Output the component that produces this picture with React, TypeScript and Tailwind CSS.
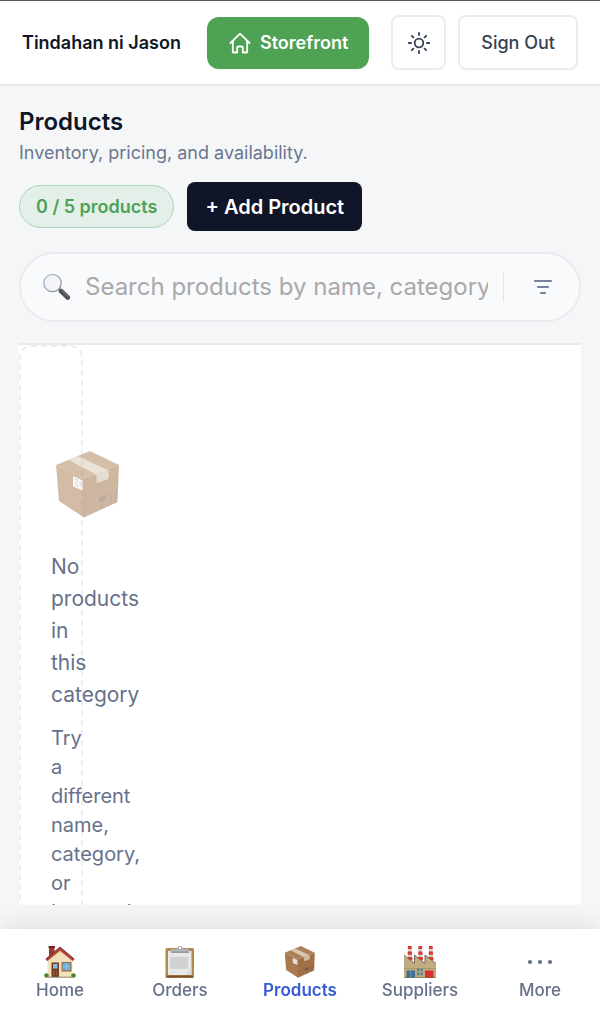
import type { ReactNode } from "react";
import clsx from "clsx";

function HomeIcon() {
  return (
    <svg className="size-6" viewBox="0 0 24 24" fill="none" stroke="currentColor" strokeWidth="1.8" strokeLinecap="round" strokeLinejoin="round" aria-hidden="true">
      <path d="M2.500 12 12 2.700l9.500 9.300" />
      <path d="M4.800 10.200v10.300a1 1 0 0 0 1 1h3.400v-5a1 1 0 0 1 1-1h3.600a1 1 0 0 1 1 1v5h3.400a1 1 0 0 0 1-1V10.200" />
    </svg>
  );
}

function SunIcon() {
  return (
    <svg className="size-6" viewBox="0 0 24 24" fill="none" stroke="currentColor" strokeWidth="1.800" strokeLinecap="round" aria-hidden="true">
      <circle cx="12" cy="12" r="4.300" />
      <path d="M12 1.800v2.200M12 20v2.200M1.800 12H4M20 12h2.200M4.800 4.800l1.600 1.600M17.600 17.600l1.600 1.600M4.800 19.200l1.600-1.600M17.600 6.400l1.600-1.600" />
    </svg>
  );
}

function SearchIcon() {
  return (
    <svg className="size-7 shrink-0" viewBox="0 0 28 28" aria-hidden="true">
      <defs>
        <linearGradient id="lens" x1="0" y1="0" x2="1" y2="1">
          <stop offset="0" stopColor="#eef0f6" />
          <stop offset="1" stopColor="#f8f8f8" />
        </linearGradient>
        <linearGradient id="rim" x1="0" y1="0" x2="1" y2="1">
          <stop offset="0" stopColor="#b4bedb" />
          <stop offset="1" stopColor="#8b8b8b" />
        </linearGradient>
      </defs>
      <path d="m16 16 3 3" stroke="#8d8f92" strokeWidth="2" />
      <path d="m18 18 6.800 6.500" stroke="#4b4f55" strokeWidth="4.600" strokeLinecap="round" />
      <path d="m19 17.500 6 5.900" stroke="#8a8e93" strokeWidth="1" strokeLinecap="round" />
      <circle cx="9.500" cy="10" r="8.700" fill="url(#lens)" stroke="url(#rim)" strokeWidth="1.300" />
    </svg>
  );
}

function FilterIcon() {
  return (
    <svg className="size-5" viewBox="0 0 20 20" stroke="currentColor" strokeWidth="2.200" strokeLinecap="round" aria-hidden="true">
      <path d="M2 4h16M5 10h10M8 16h4" />
    </svg>
  );
}

function BoxArt({ className }: { className: string }) {
  return (
    <svg className={className} viewBox="0 0 64 67" aria-hidden="true">
      <path d="M0 14 34 0l29 14-35 13.500z" fill="#ae8056" />
      <path d="m0 14 28 13.500v39L3 50z" fill="#a97a50" />
      <path d="m28 27.500 35-13.500-1.500 37L28 66.500z" fill="#a17045" />
      <path d="M28 27.500v39" stroke="#8f6038" strokeWidth=".7" />
      <path d="m12.500 9 9-4 31 14.500-12 4.200z" fill="#d8c8b2" />
      <path d="m40.500 23.700 12-4.200V28l-12 4z" fill="#cdbda6" />
      <path d="m17 25 9.500 4.500v10L17 35.500z" fill="#f0f1f2" />
      <path d="m19 28 3 1.400M19 31l3 1.400M19 34l3 1.400m1.500-4 2 1M23.500 34l2 1" stroke="#9b9fa5" strokeWidth="1" />
      <path d="m42 47 8.500-3c0 4-1.500 6-3.500 7-2.500.8-4.800-.4-5-4z" fill="#7b5a3e" />
      <path d="M46.500 51v6m-2.200.700 4.400-1.700" stroke="#7b5a3e" strokeWidth=".8" fill="none" />
      <path d="M54.500 42.500v9M59.500 40.500v9M53.500 53.500l7-2.500M53.500 44l1-2 1 1.500m3-1.500 1-2 1 1.500" fill="none" stroke="#7b5a3e" strokeWidth=".9" />
    </svg>
  );
}

function HouseArt() {
  return (
    <svg className="size-8" viewBox="0 0 32 32" aria-hidden="true">
      <path d="M5 1h5.500v9H5z" fill="#9d382d" />
      <path d="M4.500 0h6.500v2H4.500z" fill="#72251f" />
      <path d="M3.500 14 16 4l12.500 10v17.500h-25z" fill="#f1e0bc" />
      <path d="M3.500 14 16 4l12.500 10v1.500L16 6 3.500 15.500z" fill="#d8c49b" />
      <path d="M1.500 13.300 16 1l14.500 12.300-1.600 1.700L16 4.500 3.100 15z" fill="#b03a32" />
      <path d="M2 12.800 16 1l14 11.800" fill="none" stroke="#5e3330" strokeWidth=".8" />
      <path d="M7.500 16.500h7.500v15H7.500z" fill="#713b24" />
      <path d="M9 18h4.500v4.500H9z" fill="#83bde0" />
      <path d="M9 24.500h1.700v5H9zm2.800 0h1.700v5h-1.700z" fill="#8d5336" />
      <path d="M17.500 16h10v9.500h-10z" fill="#94704f" />
      <path d="M18.700 17.200h7.600v6.800h-7.600z" fill="#6cb0df" />
      <path d="M22.500 17v7m-3.800-3.500h7.600" stroke="#a8d5ef" strokeWidth=".5" />
      <path d="M4 31.200h24.500" stroke="#9d8668" />
      <path d="M6 31.500h10" stroke="#aaa" />
      <circle cx="2.500" cy="29.500" r="2.300" fill="#4f832a" />
      <circle cx="29.500" cy="29.500" r="2.300" fill="#4f832a" />
    </svg>
  );
}

function ClipboardArt() {
  return (
    <svg className="size-8" viewBox="0 0 32 32" aria-hidden="true">
      <rect x="1.500" y="2" width="28.500" height="30" rx="1.500" fill="#b3884f" />
      <path d="M2.500 29.500H29v2H2.500z" fill="#7b4e27" />
      <path d="M4 5h23.500v24H4z" fill="#e9e9e9" />
      <path d="M6 11h18v12H6z" fill="#d2d3d4" />
      <path d="M6 11.500h17M6 14h19M6 16.500h18M6 19h19M6 21.500h16M6 26h6M6 9h4" stroke="#cbcdce" strokeWidth=".6" />
      <path d="m27.500 22-7 7h7z" fill="#dadada" />
      <path d="M7 3h5.500l1-1.500h5L19.500 3H25v3.500H7z" fill="#b0b4b6" />
      <path d="M7 5.700h18v1H7z" fill="#84888a" />
      <circle cx="16" cy="1.900" r="1.800" fill="#fff" stroke="#a9afba" strokeWidth="1.200" />
    </svg>
  );
}

function FactoryArt() {
  return (
    <svg className="size-8" viewBox="0 0 32 32" aria-hidden="true">
      <path d="M4 0h3.500l1 17H3.500zM14.500 0H18l1 17h-5zM25 0h3.500l1 17h-5z" fill="#d6cfd0" />
      <path d="M4 0h3.500l.2 3H3.900zM3.800 5.500h4l.2 3.200H3.700zM3.600 11h4.600l.2 3H3.500zM14.500 0H18l.2 3h-3.800zM14.300 5.500h4l.2 3.200h-4.300zM14.100 11h4.600l.2 3H14zM25 0h3.500l.2 3h-3.800zM24.800 5.500h4l.2 3.200h-4.300zM24.600 11h4.600l.2 3h-4.900z" fill="#dd382f" />
      <path d="m0 9 10.500 8.500V9L21 17.500V9l11 8.500V32H0z" fill="#c2ab80" />
      <path d="m0 9 10.500 8.500V9L21 17.500V9l11 8.500" fill="none" stroke="#6f5f46" strokeWidth=".9" />
      <path d="M0 22.500h32" stroke="#a58f68" strokeWidth=".7" />
      <path d="M2.500 24.500h8.500V32H2.500z" fill="#3f6f8e" />
      <path d="M6.800 24.500V32" stroke="#8ba8b8" strokeWidth=".7" />
      <path d="M13 22.500h2.300v2.700H13zm3.500 0h2.300v2.700h-2.300zM13 26.500h2.300v2.700H13zm3.500 0h2.300v2.700h-2.300z" fill="#4c819c" />
      <path d="M21 24.500h8.500V32H21z" fill="#d83331" />
      <path d="M0 31.600h32" stroke="#776747" strokeWidth=".6" />
    </svg>
  );
}

function DotsIcon() {
  return (
    <svg className="size-8" viewBox="0 0 32 32" fill="currentColor" aria-hidden="true">
      <circle cx="6" cy="16" r="2.100" />
      <circle cx="16" cy="16" r="2.100" />
      <circle cx="26" cy="16" r="2.100" />
    </svg>
  );
}

const navItems: { label: string; icon: ReactNode; active?: boolean }[] = [
  { label: "Home", icon: <HouseArt /> },
  { label: "Orders", icon: <ClipboardArt /> },
  { label: "Products", icon: <BoxArt className="size-8" />, active: true },
  { label: "Suppliers", icon: <FactoryArt /> },
  { label: "More", icon: <DotsIcon /> },
];

export default function App() {
  return (
    <div className="flex h-screen flex-col bg-[#f5f6f8] font-['Inter',sans-serif] text-[#101628]">
      <header className="flex items-center justify-between border-t border-b-2 border-t-[#55555a] border-b-[#e8e9ec] bg-white px-[22px] pt-3.5 pb-3.5">
        <span className="text-lg font-semibold">Tindahan ni Jason</span>
        <div className="flex items-center gap-3">
          <a href="#storefront" className="mr-2.5 flex h-13 items-center gap-2 rounded-xl bg-[#4da254] px-[21px] text-lg font-semibold text-white shadow-xs">
            <HomeIcon />
            Storefront
          </a>
          <button type="button" aria-label="Toggle theme" className="flex size-[55px] items-center justify-center rounded-lg border-2 border-[#ebecef] text-[#334155]">
            <SunIcon />
          </button>
          <button type="button" className="h-[55px] rounded-lg border-2 border-[#ebecef] px-[21px] text-lg font-medium text-[#374151]">
            Sign Out
          </button>
        </div>
      </header>

      <main className="flex min-h-0 flex-1 flex-col px-[19px] pt-5 pb-6">
        <h1 className="text-2xl font-semibold">Products</h1>
        <p className="text-lg leading-[30px] text-[#6b7690]">Inventory, pricing, and availability.</p>

        <div className="mt-3.5 flex items-center gap-[13px]">
          <span className="flex h-[43px] items-center rounded-full border border-[#a9d6b3] bg-[#e4efe9] px-4 text-lg font-semibold text-[#4da254]">
            0 / 5 products
          </span>
          <button type="button" className="h-[49px] rounded-lg bg-[#101628] px-[18px] text-xl font-semibold text-white">
            + Add Product
          </button>
        </div>

        <div className="mt-[21px] flex h-[70px] shrink-0 items-center rounded-full border-2 border-[#e9ebee] bg-[#f9fafc] pr-[26px] pl-[22px]">
          <SearchIcon />
          <input
            type="text"
            aria-label="Search products"
            placeholder="Search products by name, category, or keyword"
            className="ml-3.5 min-w-0 flex-1 text-2xl outline-none placeholder:text-[#a9a9a9]"
          />
          <span className="ml-[15px] h-[30px] w-px bg-[#e2e5ea]" />
          <button type="button" aria-label="Filters" className="ml-[29px] text-[#78819d]">
            <FilterIcon />
          </button>
        </div>

        <section className="mt-[21px] grid min-h-0 flex-1 grid-cols-[64px] overflow-y-auto border-t-2 border-[#e8eaed] bg-white [scrollbar-width:none]">
          <div className="h-max rounded-xl border-2 border-dashed border-[#eceef1] px-[30px] py-24 text-[#66718b]">
            <BoxArt className="mt-2 ml-[5px] h-[67px] w-16 max-w-none opacity-50" />
            <h2 className="mt-[33px] text-[21px] leading-8">No products in this category</h2>
            <p className="mt-[13px] text-xl leading-[29px]">Try a different name, category, or keyword.</p>
          </div>
        </section>
      </main>

      <nav className="grid shrink-0 grid-cols-5 bg-white pt-[17px] pb-3 shadow-[0_-3px_24px_rgba(0,0,0,0.1)]">
        {navItems.map((item) => (
          <a
            key={item.label}
            href={`#${item.label.toLowerCase()}`}
            aria-current={item.active ? "page" : undefined}
            className={clsx("flex flex-col items-center text-[17px]", item.active ? "font-semibold text-[#365bd3]" : "font-medium text-[#66718b]")}
          >
            {item.icon}
            {item.label}
          </a>
        ))}
      </nav>
    </div>
  );
}
